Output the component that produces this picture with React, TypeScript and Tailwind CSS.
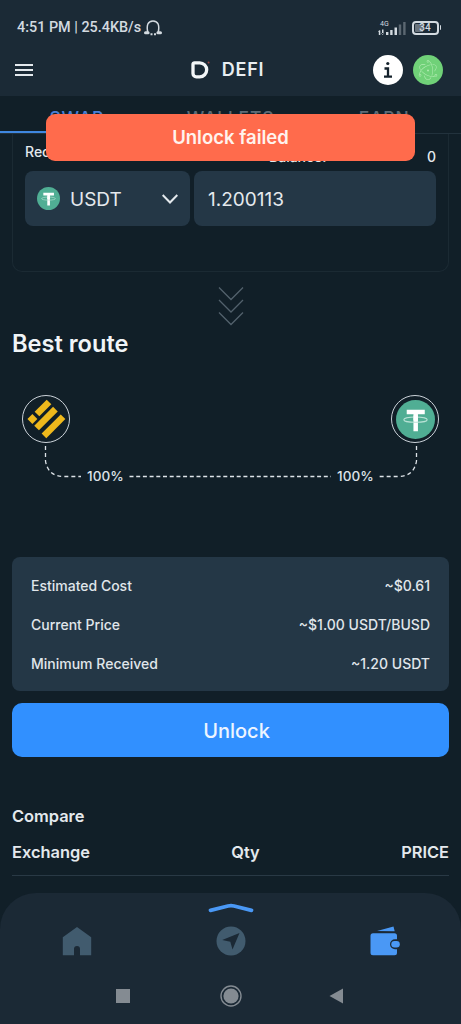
import React from 'react';
import { SiElectron } from 'react-icons/si';

const tabs = ['SWAP', 'WALLETS', 'EARN'];

const details = [
  { label: 'Estimated Cost', value: '~$0.61' },
  { label: 'Current Price', value: '~$1.00 USDT/BUSD' },
  { label: 'Minimum Received', value: '~1.20 USDT' },
];

function Tether({ className }: { className?: string }) {
  return (
    <svg viewBox="0 0 40 40" className={className}>
      <circle cx="20" cy="20" r="20" fill="#50ae94" />
      <path d="M11 10h18.500v4.600h-7V32h-4.600V14.600H11z" fill="#fff" />
      <ellipse cx="20" cy="20.200" rx="12" ry="2.700" fill="none" stroke="#b9e2d6" strokeWidth="1.100" />
      <path d="M17.900 16h4.600v5h-4.600z" fill="#fff" />
    </svg>
  );
}

function StatusBar() {
  return (
    <div className="flex h-[54px] items-center justify-between pt-px pl-[17px] pr-[20px] text-[#d3dae0]">
      <div className="flex items-center gap-[3px] font-[Roboto] text-[14.400px] leading-5 font-medium">
        <span>4:51 PM | 25.4KB/s</span>
        <svg width="18" height="16" viewBox="0 0 18 16" fill="none" stroke="currentColor" strokeWidth="1.500">
          <path d="M4 13.500C2 5 4 1 9 1s7 4 5 12.500" />
          <path d="M1.500 12.800h2.600M13.900 12.800h2.600" strokeWidth="3" strokeLinecap="round" />
          <path d="M6.500 14.200h2M10 14.200h2" strokeWidth="2" />
        </svg>
      </div>
      <div className="flex items-center gap-[6px] font-[Roboto]">
        <svg width="28" height="16" viewBox="0 0 28 16" fill="currentColor">
          <text x="2" y="5.800" fontSize="7">4G</text>
          <path d="M.8 10.500h1.500v4.500H.8zM0 12l1.500-2L3 12zM4 9.500h1.500V14H4zM3.200 13l1.500 2 1.500-2zM8 12h2.400v3H8zM12.200 10h2.400v5h-2.400zM16.500 7.500H19V15h-2.500z" />
          <path d="M20.800 4.500h2.400V15h-2.400zM25.200 2h2.400v13h-2.400z" opacity=".35" />
        </svg>
        <div className="flex items-center gap-px">
          <div className="flex h-[14px] w-[27px] items-center justify-center rounded-[4px] border-[2px] border-current bg-[linear-gradient(90deg,#6a747d_38%,transparent_38%)] bg-clip-content p-px text-[10px] leading-none font-medium">
            34
          </div>
          <div className="h-[5px] w-[1.500px] rounded-r bg-current" />
        </div>
      </div>
    </div>
  );
}

function Header() {
  return (
    <header className="h-24 bg-[#1b2a36]">
      <StatusBar />
      <div className="grid h-8 grid-cols-3 items-center pl-[15px] pr-[18px]">
        <div className="flex w-[18px] flex-col gap-[3px]">
          <div className="h-[2px] bg-[#e4e9ed]" />
          <div className="h-[2px] bg-[#e4e9ed]" />
          <div className="h-[2px] bg-[#e4e9ed]" />
        </div>
        <div className="flex items-center justify-center gap-[12px] pr-[4px]">
          <svg width="20" height="20" viewBox="0 0 20 20">
            <path d="M4.500 2.800h5.200a7 7 0 0 1 0 14H6.300a3.300 3.300 0 0 1-3.300-3.300V4.300a1.500 1.500 0 0 1 1.500-1.500z" fill="none" stroke="#f3f6f8" strokeWidth="3.300" />
            <circle cx="18.600" cy="2.500" r="1" fill="#9b4743" />
          </svg>
          <h1 className="text-[18px] leading-6 font-semibold tracking-[0.700px] text-[#e8edf1]">DEFI</h1>
        </div>
        <div className="flex items-center justify-end gap-[10px]">
          <div className="flex size-[30px] items-center justify-center rounded-full bg-white">
            <svg width="10" height="18" viewBox="0 0 10 18" fill="none" stroke="#15222c" strokeWidth="2.300">
              <path d="M1.500 7.500H5v8.200M1 15.700h8" />
              <circle cx="4.800" cy="2.500" r="1.600" fill="#15222c" stroke="none" />
            </svg>
          </div>
          <div className="flex size-[30px] items-center justify-center rounded-full bg-[#70d178]">
            <SiElectron className="size-5 text-[#b4edb4]" />
          </div>
        </div>
      </div>
    </header>
  );
}

function Tabs() {
  return (
    <nav className="flex h-[38px] items-stretch border-b border-[#22323d]">
      {tabs.map((tab, i) => (
        <div
          key={tab}
          className={
            i === 0
              ? 'flex-1 border-b-[2px] border-[#3f87e0] pt-[10px] text-center text-[17.500px] leading-6 font-medium tracking-[0.800px] text-[#4a7fd6]'
              : 'flex-1 pt-[10px] text-center text-[17.500px] leading-6 font-medium tracking-[0.800px] text-[#5d6b76]'
          }
        >
          {tab}
        </div>
      ))}
    </nav>
  );
}

function Receive() {
  return (
    <section className="mx-3 h-[138px] rounded-b-[10px] border border-t-0 border-[#1b2a33] px-3">
      <div className="flex h-[37px] items-start justify-between text-[14px] leading-5 font-medium text-[#e4e9ed]">
        <span className="pt-[8px]">Receive</span>
        <div className="flex w-[167px] justify-between pt-[13px]">
          <span>Balance:</span>
          <span>0</span>
        </div>
      </div>
      <div className="flex gap-1 text-[19px] text-[#e4e9ed]">
        <div className="flex h-[55px] w-[165px] items-center rounded-[8px] bg-[#243746] pl-[12px] pr-[12px]">
          <Tether className="size-[23px]" />
          <span className="flex-1 pt-[3px] pl-[10px]">USDT</span>
          <svg width="16" height="10" viewBox="0 0 16 10" fill="none" stroke="currentColor" strokeWidth="2">
            <path d="M.7 1L8 8.500 15.300 1" />
          </svg>
        </div>
        <div className="flex h-[55px] flex-1 items-center rounded-[8px] bg-[#243746] pt-[3px] pl-[14px]">1.200113</div>
      </div>
    </section>
  );
}

function Route() {
  return (
    <section className="h-[112px] pt-[23px]">
      <div className="flex justify-between pl-[22px] pr-[22px]">
        <div className="flex size-12 items-center justify-center rounded-full border-[1px] border-[#cbd2d9]">
          <svg width="40" height="40" viewBox="0 0 40 40" fill="#efb91c" className="shrink-0">
            <rect x="-8.500" y="-3.300" width="17" height="6.600" transform="translate(17 9) rotate(-45)" />
            <rect x="-13.300" y="-3.300" width="26.600" height="6.600" transform="translate(20 19.600) rotate(-45)" />
            <rect x="-3.500" y="-3.500" width="7" height="7" transform="translate(6.400 20) rotate(-45)" />
            <rect x="-13.500" y="-3.300" width="27" height="6.600" transform="translate(27.500 27.300) rotate(-45)" />
          </svg>
        </div>
        <div className="flex size-12 items-center justify-center rounded-full border-[1px] border-[#cbd2d9]">
          <Tether className="size-[39px]" />
        </div>
      </div>
      <div className="flex h-[41px] items-start pl-[44px] text-[#dde3e8]">
        <svg width="43" height="41" viewBox="0 0 43 41" fill="none" stroke="#dde3e8" strokeWidth="1.300" strokeDasharray="4 3">
          <path d="M1.500 3V18Q4 33.500 20 33.500H37" />
        </svg>
        <span className="w-[37px] pt-[23px] text-[13.600px] leading-5 font-medium">100%</span>
        <svg width="213" height="41" viewBox="0 0 213 41" stroke="#dde3e8" strokeWidth="1.300" strokeDasharray="4 2.700">
          <path d="M5.500 33.500H207" />
        </svg>
        <span className="w-[37px] pt-[23px] text-[13.600px] leading-5 font-medium">100%</span>
        <svg width="45" height="41" viewBox="0 0 45 41" fill="none" stroke="#dde3e8" strokeWidth="1.300" strokeDasharray="4 3">
          <path d="M42.500 3V18Q40 33.500 24 33.500H5" />
        </svg>
      </div>
    </section>
  );
}

function BottomBar() {
  return (
    <footer className="h-[131px] rounded-t-[36px] bg-[#1b2935] pt-[9px]">
      <svg width="46" height="12" viewBox="0 0 46 12" className="mx-auto" fill="none" stroke="#4a98f5" strokeWidth="3.800" strokeLinecap="round" strokeLinejoin="round">
        <path d="M2.500 8.400L20 4Q23 3.400 26 4L43.500 8.400" />
      </svg>
      <div className="mt-[11px] flex h-[31px] items-center justify-between pl-[62px] pr-[61px]">
        <svg width="30" height="30" viewBox="0 0 30 30" fill="#415b6e">
          <path d="M15 1L29.200 11.200V29.200H18V23a3 3 0 0 0-6 0v6.200H.8V11.200z" />
        </svg>
        <svg width="30" height="30" viewBox="0 0 30 30">
          <circle cx="15" cy="15" r="14.500" fill="#415b6e" />
          <path d="M23.500 7L16.500 23.500l-2.200-7.700L6.200 14z" fill="#1b2935" />
        </svg>
        <svg width="30" height="30" viewBox="0 0 30 30" fill="#4a98f5">
          <path d="M7 5L23.500.5l1.200 4.700zM3 7.300h21.500q2.500 0 2.500 2.500v3.400h-2a5 5 0 0 0 0 10h2v3.600q0 2.500-2.500 2.500H3Q.5 29.300.5 26.800V9.800Q.5 7.300 3 7.300z" />
          <rect x="21.300" y="15" width="8.500" height="6.400" rx="3.200" />
        </svg>
      </div>
      <div className="mt-[29px] flex items-center justify-between pl-[116px] pr-[117px]">
        <div className="size-[14px] bg-[#848b92]" />
        <svg width="22" height="22" viewBox="0 0 22 22" className="ml-[3px]">
          <circle cx="11" cy="11" r="10" fill="none" stroke="#848b92" strokeWidth="1.400" />
          <circle cx="11" cy="11" r="7.600" fill="#848b92" />
        </svg>
        <svg width="15" height="16" viewBox="0 0 15 16" fill="#848b92">
          <path d="M14 .5v15L.5 8z" />
        </svg>
      </div>
    </footer>
  );
}

function App() {
  return (
    <div className="relative flex h-[1024px] w-[461px] flex-col overflow-hidden bg-[#111f28] font-[Inter,sans-serif]">
      <Header />
      <Tabs />
      <Receive />

      <svg width="28" height="40" viewBox="0 0 28 40" className="mx-auto mt-[14px]" fill="none" stroke="#52616c" strokeWidth="1.300">
        <path d="M2 1.500l12 12 12-12M2 14l12 12 12-12M2 26.500l12 12 12-12" />
      </svg>

      <h2 className="mt-[3px] px-3 text-[23.600px] leading-[30px] font-semibold text-[#f0f4f7]">Best route</h2>

      {/* Swap path */}
      <div className="mt-[13px]">
        <Route />
      </div>

      {/* Swap details */}
      <div className="mx-3 mt-[73px] flex h-[134px] flex-col rounded-[8px] bg-[#243746] px-[19px] pt-[9px] text-[14px] font-medium text-[#e0e6eb]">
        {details.map((item) => (
          <div key={item.label} className="flex h-[39px] items-center justify-between">
            <span>{item.label}</span>
            <span>{item.value}</span>
          </div>
        ))}
      </div>
      <button className="mx-3 mt-3 h-[54px] rounded-[10px] bg-[#3190ff] pt-[2px] pl-[12px] text-[20px] font-medium text-[#edf5ff]">
        Unlock
      </button>

      {/* Compare table */}
      <section className="mx-3 mt-[47px] text-[16.400px] leading-6 font-semibold text-[#e4e9ed]">
        <h3>Compare</h3>
        <div className="mt-3 flex h-[36px] justify-between border-b border-[#293945]">
          <span className="w-[79px]">Exchange</span>
          <span className="pl-[30px]">Qty</span>
          <span className="w-[79px] text-right">PRICE</span>
        </div>
      </section>

      <div className="mt-auto">
        <BottomBar />
      </div>

      {/* Toast */}
      <div className="absolute top-[114px] left-[46px] flex h-[47px] w-[369px] items-center justify-center rounded-[9px] bg-[#ff6b4c] text-[18.500px] font-semibold text-[#fff3ee]">
        Unlock failed
      </div>
    </div>
  );
}

export default App;
